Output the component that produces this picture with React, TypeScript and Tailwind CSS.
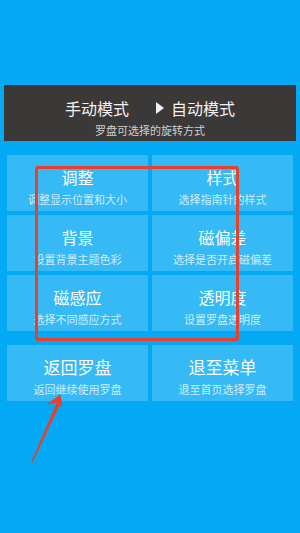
import React from "react";

const cells = [
  { title: "调整", desc: "调整显示位置和大小" },
  { title: "样式", desc: "选择指南针的样式" },
  { title: "背景", desc: "设置背景主题色彩" },
  { title: "磁偏差", desc: "选择是否开启磁偏差" },
  { title: "磁感应", desc: "选择不同感应方式" },
  { title: "透明度", desc: "设置罗盘透明度" },
];

const bottom = [
  { title: "返回罗盘", desc: "返回继续使用罗盘" },
  { title: "退至菜单", desc: "退至首页选择罗盘" },
];

function Cell({ title, desc, big }: { title: string; desc: string; big?: boolean }) {
  return (
    <div className="h-[56px] bg-white/20 flex flex-col items-center pt-[12px]">
      <p className={`${big ? "text-[17px]" : "text-[16px]"} leading-[20px] text-white`}>{title}</p>
      <p className="text-[11px] leading-[14px] mt-[5px] text-white/75">{desc}</p>
    </div>
  );
}

export default function App() {
  return (
    <div
      className="relative w-full h-[533px] bg-[#03a9f4] pt-[85px] px-[4px] overflow-hidden"
      style={{ fontFamily: '"Noto Sans CJK SC", "Noto Sans", sans-serif' }}
    >
      {/* Mode header */}
      <div className="h-[56px] bg-[#3b3838] flex flex-col items-center pt-[13px]">
        <div className="flex items-center text-[16px] leading-[20px] text-[#f2f2f2]">
          <span>手动模式</span>
          <svg width="8" height="12" viewBox="0 0 8 12" className="ml-[27px] mr-[7px]">
            <path d="M0 0 L8 6 L0 12 Z" fill="#f2f2f2" />
          </svg>
          <span>自动模式</span>
        </div>
        <p className="text-[11px] leading-[14px] mt-[5px] text-[#cfcfcf]">罗盘可选择的旋转方式</p>
      </div>

      {/* Settings grid */}
      <div className="mx-[3px] mt-[14px] grid grid-cols-2 gap-[4px]">
        {cells.map((c) => (
          <Cell key={c.title} title={c.title} desc={c.desc} />
        ))}
      </div>

      <div className="mx-[3px] mt-[14px] grid grid-cols-2 gap-[4px]">
        {bottom.map((c) => (
          <Cell key={c.title} title={c.title} desc={c.desc} big />
        ))}
      </div>

      {/* annotation overlays */}
      <div className="absolute left-[35px] top-[166px] w-[204px] h-[175px] border-[3px] border-[#e8402c] rounded-[3px]" />
      <svg className="absolute left-0 top-0" width="300" height="533" viewBox="0 0 300 533">
        <path d="M32 462 L57 404 L59 405 Z" fill="#e8402c" stroke="#e8402c" strokeWidth="1.5" strokeLinejoin="round" />
        <path d="M60 395 L48 404 L56 402 L62 406 Z" fill="#e8402c" stroke="#e8402c" strokeWidth="1" strokeLinejoin="round" />
      </svg>
    </div>
  );
}
